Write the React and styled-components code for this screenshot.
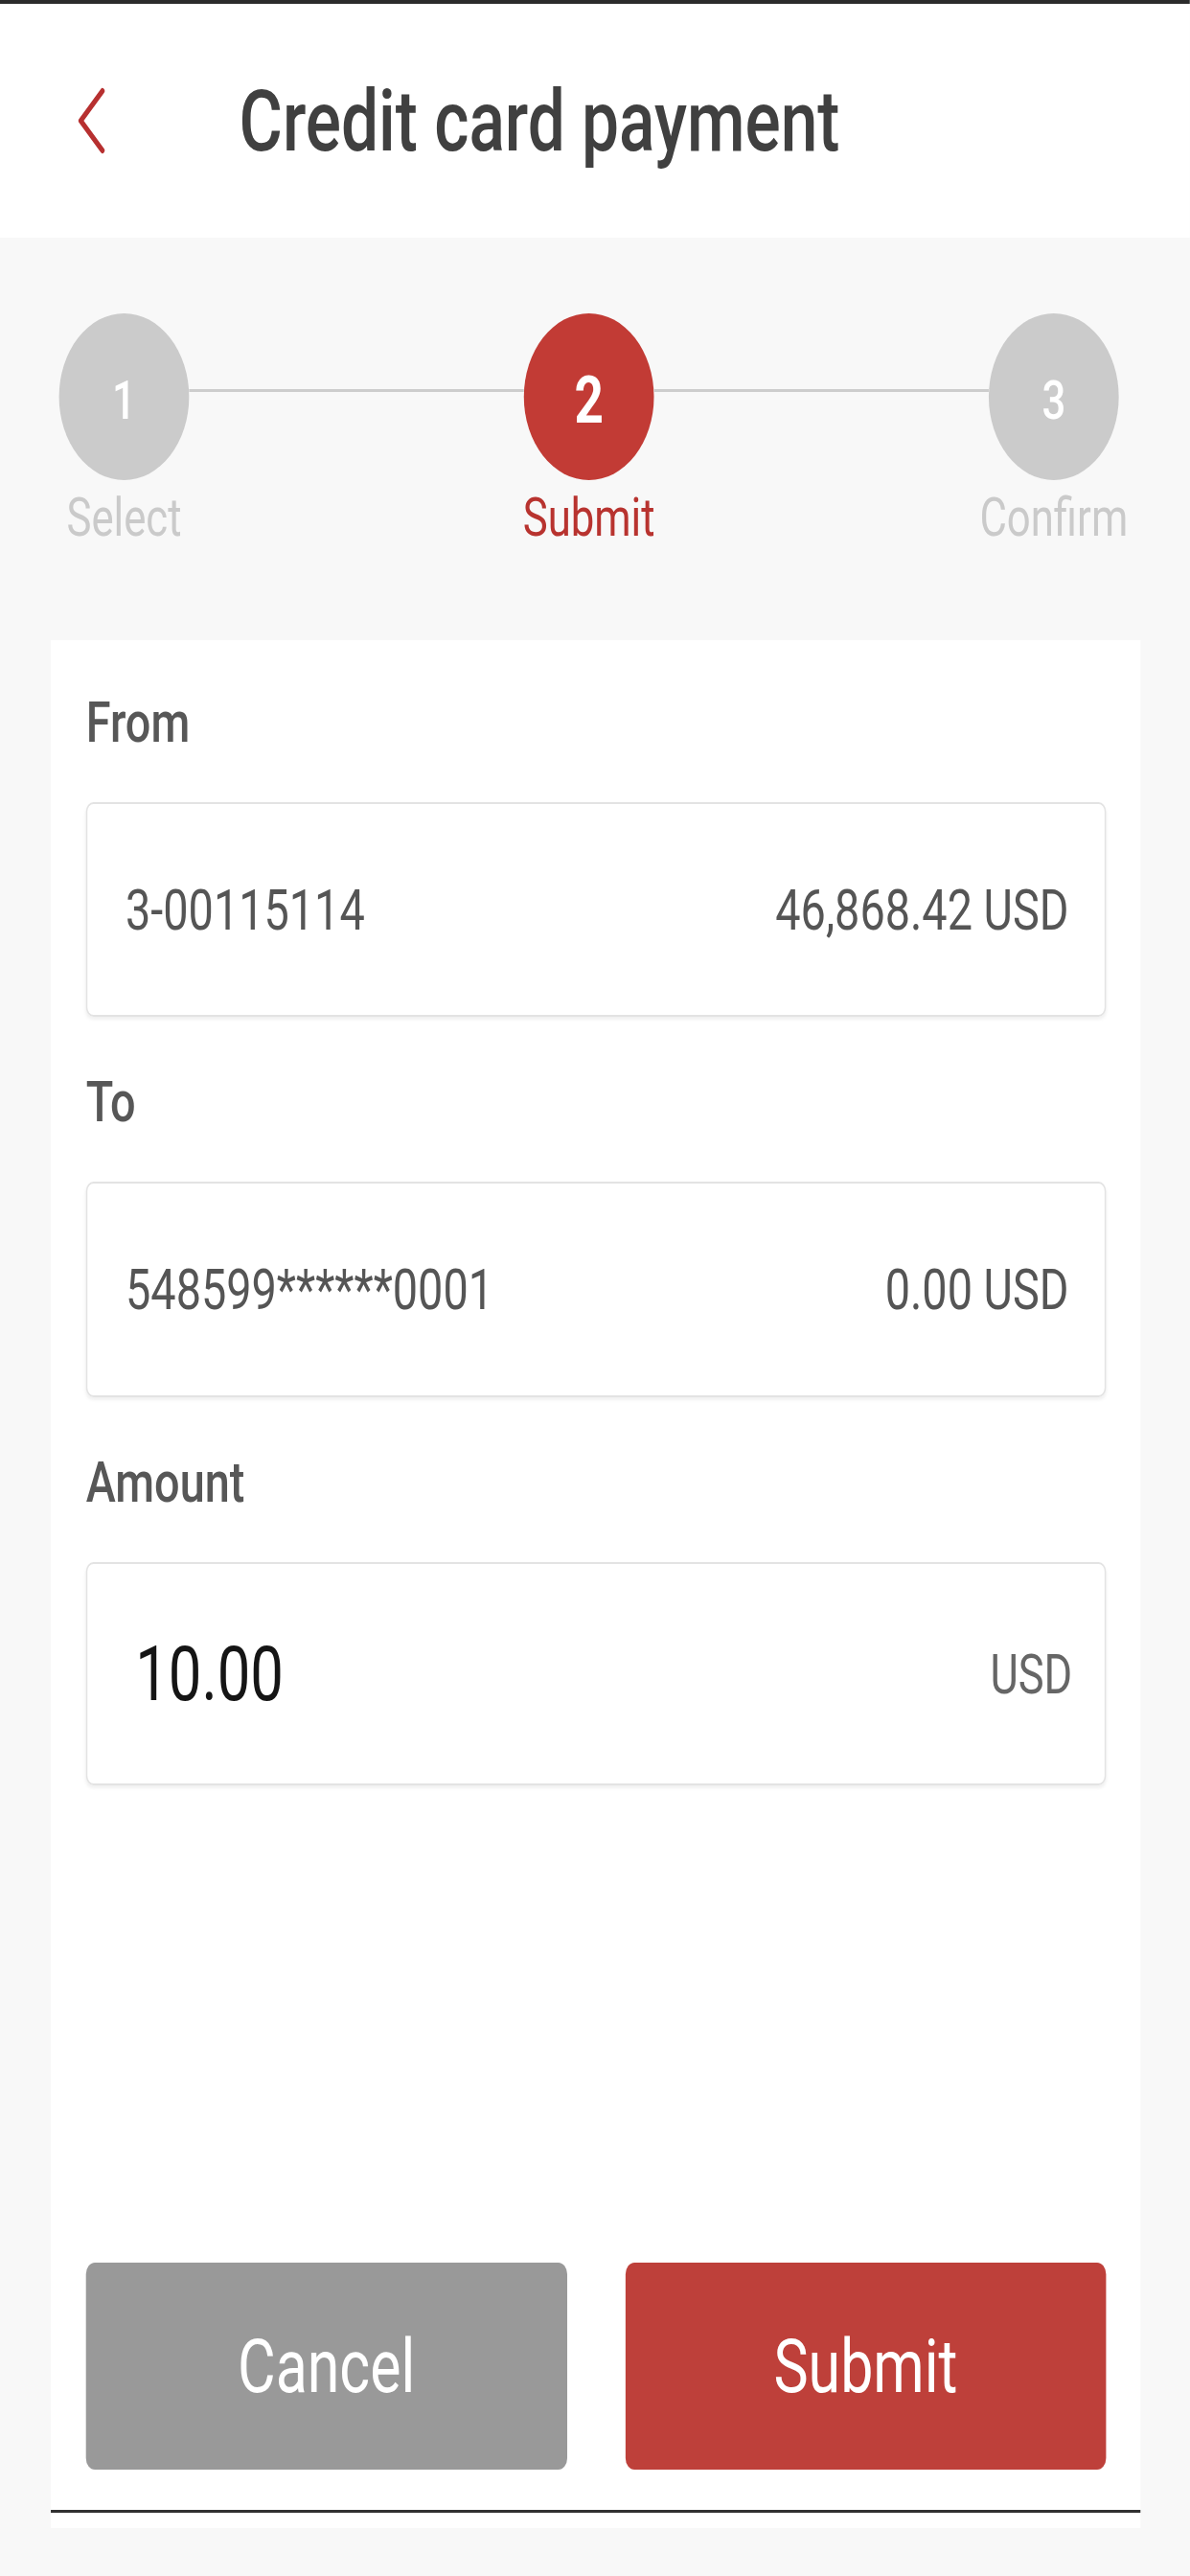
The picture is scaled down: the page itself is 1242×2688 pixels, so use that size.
import React from 'react';
import styled, { createGlobalStyle } from 'styled-components';

// the reference is a phone capture squeezed sideways, so the frame is
// laid out wide and narrowed once with scaleX
const SQUEEZE = 0.78;
const FRAME_WIDTH = Math.round(1242 / SQUEEZE);

const GlobalStyle = createGlobalStyle`
  * { box-sizing: border-box; }
  html, body {
    margin: 0;
    padding: 0;
    background: #f8f8f8;
    overflow: hidden;
  }
`;

const Screen = styled.div`
  width: ${FRAME_WIDTH}px;
  height: 2688px;
  transform: scaleX(${SQUEEZE});
  transform-origin: 0 0;
  display: flex;
  flex-direction: column;
  background: #f8f8f8;
  font-family: Roboto, 'Liberation Sans', sans-serif;
`;

const TopEdge = styled.div`
  height: 4px;
  background: #2b2b2b;
`;

const Header = styled.header`
  height: 244px;
  background: #fff;
  display: flex;
  align-items: center;
  gap: 178px;
  padding-left: 102px;
`;

const BackButton = styled.button`
  display: flex;
  padding: 0;
  border: none;
  background: none;
`;

const Title = styled.h1`
  margin: 0;
  font-size: 89px;
  line-height: 1;
  font-weight: 500;
  color: #404040;
`;

const Stepper = styled.div`
  display: flex;
  align-items: flex-start;
  padding: 79px 95px 0 79px;
`;

const Step = styled.div`
  width: 174px;
  flex-shrink: 0;
  display: flex;
  flex-direction: column;
  align-items: center;
`;

const Circle = styled.div`
  width: 174px;
  height: 174px;
  border-radius: 50%;
  background: ${p => (p.$active ? '#c23b35' : '#cbcbcb')};
  color: #fff;
  display: flex;
  align-items: center;
  justify-content: center;
  padding-top: 8px;
  font-size: ${p => (p.$active ? 68 : 56)}px;
  font-weight: ${p => (p.$active ? 700 : 500)};
  line-height: 1;
`;

const Connector = styled.div`
  flex: 1;
  height: 3px;
  margin-top: 79px;
  background: #cdcdcd;
`;

const StepLabel = styled.span`
  margin-top: 11px;
  font-size: 56px;
  line-height: 56px;
  white-space: nowrap;
  color: ${p => (p.$active ? '#b8332f' : '#cacaca')};
`;

const Card = styled.section`
  flex: 1;
  margin: 100px 66px 50px 68px;
  padding: 56px 0 16px;
  background: #fff;
  display: flex;
  flex-direction: column;
`;

const Field = styled.div`
  padding: 0 46px 0 47px;

  & + & {
    margin-top: 59px;
  }
`;

const FieldLabel = styled.div`
  margin-bottom: 53px;
  font-size: 60px;
  line-height: 60px;
  font-weight: 500;
  color: #575757;
`;

const Box = styled.div`
  height: ${p => p.$height}px;
  border: 2px solid #e3e3e3;
  border-radius: 10px;
  box-shadow: 0 3px 4px rgba(0, 0, 0, 0.06);
  display: flex;
  align-items: center;
  justify-content: space-between;
  padding: 0 ${p => p.$right}px 0 ${p => p.$left}px;
`;

const Value = styled.span`
  font-size: 60px;
  color: #555;
`;

const AmountValue = styled.span`
  font-size: 79px;
  color: #151515;
`;

const Currency = styled.span`
  font-size: 58px;
  color: #666;
`;

const ButtonRow = styled.div`
  margin-top: auto;
  padding: 0 46px 0 47px;
  display: flex;
  gap: 78px;
`;

const Button = styled.button`
  flex: 1;
  height: 216px;
  border: none;
  border-radius: 12px;
  background: ${p => (p.$primary ? '#be403a' : '#999999')};
  color: #fff;
  font-family: inherit;
  font-size: 78px;
  font-weight: 400;
`;

const Divider = styled.div`
  margin-top: 42px;
  height: 3px;
  background: #303030;
`;

const steps = [
  { id: 1, label: 'Select' },
  { id: 2, label: 'Submit', active: true },
  { id: 3, label: 'Confirm' },
];

const Chevron = () => (
  <svg width="40" height="70" viewBox="0 0 40 70">
    <path d="M35 4 L6 35 L35 66" fill="none" stroke="#b73030" strokeWidth="6" strokeLinecap="round" strokeLinejoin="round" />
  </svg>
);

const App = () => (
  <>
    <GlobalStyle />
    <Screen>
      <TopEdge />
      <Header>
        <BackButton aria-label="Back">
          <Chevron />
        </BackButton>
        <Title>Credit card payment</Title>
      </Header>

      <Stepper>
        {steps.map((step, i) => (
          <React.Fragment key={step.id}>
            {i > 0 && <Connector />}
            <Step>
              <Circle $active={step.active}>{step.id}</Circle>
              <StepLabel $active={step.active}>{step.label}</StepLabel>
            </Step>
          </React.Fragment>
        ))}
      </Stepper>

      <Card>
        <Field>
          <FieldLabel>From</FieldLabel>
          <Box $height={224} $left={51} $right={48}>
            <Value>3-00115114</Value>
            <Value>46,868.42 USD</Value>
          </Box>
        </Field>
        <Field>
          <FieldLabel>To</FieldLabel>
          <Box $height={225} $left={51} $right={48}>
            <Value>548599******0001</Value>
            <Value>0.00 USD</Value>
          </Box>
        </Field>
        <Field>
          <FieldLabel>Amount</FieldLabel>
          <Box $height={233} $left={64} $right={43}>
            <AmountValue>10.00</AmountValue>
            <Currency>USD</Currency>
          </Box>
        </Field>

        <ButtonRow>
          <Button>Cancel</Button>
          <Button $primary>Submit</Button>
        </ButtonRow>
        <Divider />
      </Card>
    </Screen>
  </>
);

export default App;
